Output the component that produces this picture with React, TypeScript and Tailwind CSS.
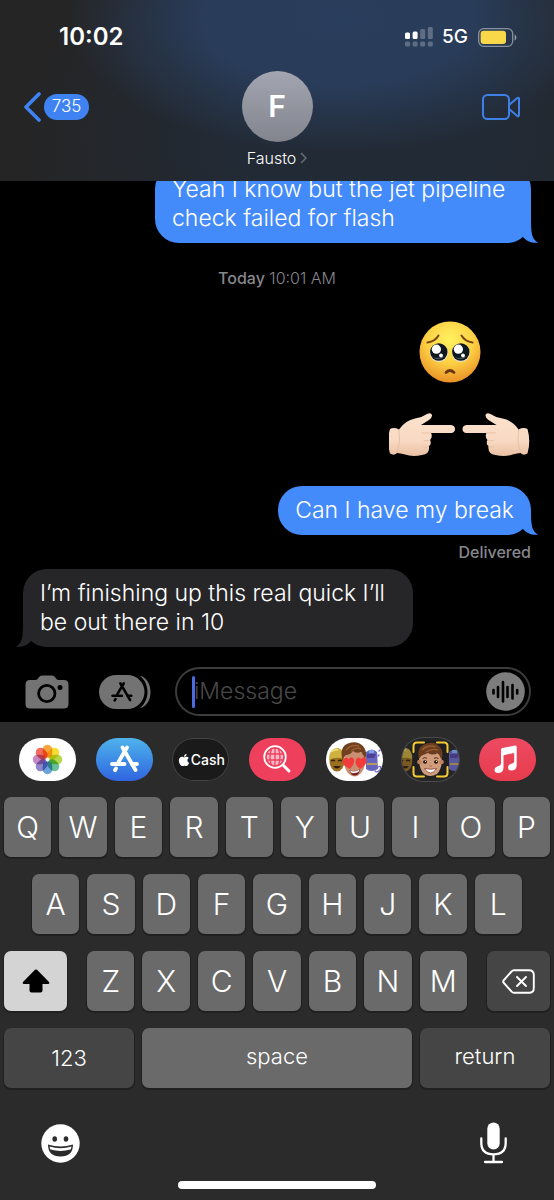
import React from "react";
import { FaApple } from "react-icons/fa";

const ROW_ONE = "QWERTYUIOP".split("");
const ROW_TWO = "ASDFGHJKL".split("");
const ROW_THREE = "ZXCVBNM".split("");

interface BubbleProps {
  children: React.ReactNode;
  side: "in" | "out";
}

function Bubble({ children, side }: BubbleProps) {
  if (side === "in") {
    return (
      <div className="relative self-start max-w-[390px] rounded-[24px] bg-[#262629] px-[17px] py-[10px] text-[23px] leading-[29px] font-[350] text-white">
        <svg className="absolute bottom-0 -left-[7px] -scale-x-100 text-[#262629]" width="24" height="25" viewBox="0 0 24 25" fill="currentColor">
          <path d="M17 0C17 15 17.500 20.500 24 24.800C17 25.300 12.500 23 9 19L4 8Z" />
        </svg>
        <p className="relative">{children}</p>
      </div>
    );
  }

  return (
    <div className="relative self-end max-w-[376px] rounded-[24px] bg-[#438afa] px-[17px] py-[10px] text-[23px] leading-[29px] font-[350] text-white">
      <svg className="absolute bottom-0 -right-[7px] text-[#438afa]" width="24" height="25" viewBox="0 0 24 25" fill="currentColor">
        <path d="M17 0C17 15 17.500 20.500 24 24.800C17 25.300 12.500 23 9 19L4 8Z" />
      </svg>
      <p className="relative">{children}</p>
    </div>
  );
}

function StatusIcons() {
  return (
    <div className="flex items-center">
      <svg width="28" height="20" viewBox="0 0 28 20" fill="#fff">
        <rect x="0" y="5.5" width="5" height="6.5" rx="1.5" />
        <rect x="7.6" y="4.5" width="5" height="7.5" rx="1.5" />
        <g opacity="0.25">
          <rect x="15.2" y="2" width="5" height="10" rx="1.5" />
          <rect x="22.8" y="0" width="5" height="12" rx="1.5" />
          <rect x="0" y="14.5" width="5" height="5" rx="1.5" />
          <rect x="7.6" y="14.5" width="5" height="5" rx="1.5" />
          <rect x="15.2" y="14.5" width="5" height="5" rx="1.5" />
          <rect x="22.8" y="14.5" width="5" height="5" rx="1.5" />
        </g>
      </svg>
      <span className="ml-[9px] mr-[10px] text-[19px] leading-6 font-medium">5G</span>
      <svg width="39" height="19" viewBox="0 0 39 19" fill="none">
        <rect x="0.7" y="0.7" width="34" height="17.6" rx="5" stroke="#fff" strokeOpacity="0.45" strokeWidth="1.3" />
        <rect x="2.6" y="2.7" width="25.4" height="13.4" rx="3" fill="#f8d849" />
        <path d="M36.6 6.5C39 7.5 39 11.5 36.6 12.5Z" fill="#fff" fillOpacity="0.5" />
      </svg>
    </div>
  );
}

function Header() {
  return (
    <header className="relative z-10 bg-[#252526] bg-[radial-gradient(ellipse_270px_135px_at_61%_10%,#293e5c_0%,#293c59_50%,transparent_100%),radial-gradient(ellipse_340px_220px_at_66%_75%,#222a35_40%,transparent_100%)] pb-[13px]">
      <div className="flex h-[54px] items-center justify-between pt-5 pl-[59px] pr-[37px]">
        <time className="text-[24px] leading-[34px] font-semibold">10:02</time>
        <StatusIcons />
      </div>
      <div className="mt-[17px] grid grid-cols-[1fr_auto_1fr] items-start">
        <button aria-label="Back" className="flex h-[71px] items-center gap-[3px] justify-self-start pl-6">
          <svg width="17" height="30" viewBox="0 0 17 30" fill="none" stroke="#3f83f2" strokeWidth="3.6" strokeLinecap="round" strokeLinejoin="round">
            <path d="M15 2L2 15L15 28" />
          </svg>
          <span className="flex h-[26px] w-[45px] items-center justify-center rounded-full bg-[#3f83f2] text-[17px] font-[350]">735</span>
        </button>
        <button className="flex flex-col items-center gap-[6px]">
          <span className="flex size-[71px] items-center justify-center rounded-full bg-gradient-to-b from-[#a3a6b0] to-[#82848e] text-[30px] font-semibold">F</span>
          <span className="flex items-center gap-1 text-[16px] leading-5 font-[350]">
            Fausto
            <svg width="7" height="12" viewBox="0 0 7 12" fill="none" stroke="#686c73" strokeWidth="1.5">
              <path d="M1 1L6 6L1 11" />
            </svg>
          </span>
        </button>
        <button aria-label="Video call" className="flex h-[71px] items-center justify-self-end pr-[34px]">
          <svg width="38" height="26" viewBox="0 0 38 26" fill="none" stroke="#3f80e8" strokeWidth="2" strokeLinejoin="round">
            <rect x="1" y="1" width="26" height="24" rx="4.5" />
            <path d="M27 11L35 4.2Q37 3 37 5V21Q37 23 35 21.8L27 15" />
          </svg>
        </button>
      </div>
    </header>
  );
}

function PleadingFace() {
  return (
    <svg width="62" height="62" viewBox="0 0 62 62" role="img" aria-label="Pleading face">
      <defs>
        <radialGradient id="face" cx="0.5" cy="0.3" r="0.7">
          <stop offset="0" stopColor="#fff25f" />
          <stop offset="0.55" stopColor="#fdd045" />
          <stop offset="1" stopColor="#e99125" />
        </radialGradient>
      </defs>
      <circle cx="31" cy="31" r="30.5" fill="url(#face)" />
      <path d="M8.5 21.5Q16 20.500 19.500 14.500M53.500 21.500Q46 20.500 42.500 14.500" fill="none" stroke="#7a4311" strokeWidth="2" strokeLinecap="round" />
      <g fill="#e9e4d8">
        <circle cx="19.800" cy="32" r="9" />
        <circle cx="41.800" cy="32" r="9" />
      </g>
      <g fill="#10181f">
        <circle cx="19.800" cy="31" r="8.700" />
        <circle cx="41.800" cy="31" r="8.700" />
      </g>
      <g fill="#4c5963">
        <path d="M14 36Q20 41 26 35Q20 38.500 14 36ZM36 36Q42 41 48 35Q42 38.500 36 36Z" />
      </g>
      <g fill="#fff">
        <circle cx="17.400" cy="28.200" r="4.600" />
        <circle cx="39.400" cy="28.200" r="4.600" />
        <circle cx="22" cy="34.500" r="1.900" />
        <circle cx="44" cy="34.500" r="1.900" />
      </g>
      <path d="M27 51.500Q31 47.500 35 51.500" fill="none" stroke="#6b3710" strokeWidth="2.800" strokeLinecap="round" />
    </svg>
  );
}

function Hand() {
  return (
    <g>
      <path
        d="M2 18Q6 16 11 18.500Q17 9.500 27 7.500Q34 6.500 39 3Q43 1 44 4Q44.500 6 41 9L33 14H63Q67 14.500 67 18Q67 21.700 63 22H43Q45 26 42 29Q44 33 41 35Q42 43 34 44Q24 46 17 43.500Q12 42 9 42Q6 45 2 42.500Q-1.500 30 2 18Z"
        fill="url(#skin)"
      />
      <path d="M11 19Q13 30 9 42" fill="none" stroke="#e3bb9e" strokeWidth="0.800" />
      <path d="M43 21.900H34M42 29Q39 30.500 36 29.500M41 35Q39 37 36 36" fill="none" stroke="#e6c0a5" strokeWidth="0.900" strokeLinecap="round" />
    </g>
  );
}

function PointingHands() {
  return (
    <svg width="142" height="47" viewBox="1 0 142 47" role="img" aria-label="Two hands pointing at each other">
      <defs>
        <linearGradient id="skin" x1="0" y1="0" x2="0" y2="1">
          <stop offset="0" stopColor="#fde3cf" />
          <stop offset="0.65" stopColor="#f8d9c2" />
          <stop offset="1" stopColor="#e9c0a3" />
        </linearGradient>
      </defs>
      <Hand />
      <g transform="matrix(-1 0 0 1 141.500 0)">
        <Hand />
      </g>
    </svg>
  );
}

function Messages() {
  return (
    <main className="-mt-4 flex flex-1 flex-col px-[23px]">
      <Bubble side="out">Yeah I know but the jet pipeline check failed for flash</Bubble>
      <p className="mt-[25px] text-center text-[16px] leading-5 font-[350] text-[#87878c]">
        <span className="font-medium">Today</span> 10:01 AM
      </p>
      <div className="mt-[33px] self-end pr-[50px]">
        <PleadingFace />
      </div>
      <div className="mt-7 self-end">
        <PointingHands />
      </div>
      <div className="mt-7 flex flex-col">
        <Bubble side="out">Can I have my break</Bubble>
      </div>
      <p className="mt-[7px] mb-[7px] self-end text-[16px] leading-5 font-medium text-[#87878c]">Delivered</p>
      <Bubble side="in">I’m finishing up this real quick I’ll be out there in 10</Bubble>
    </main>
  );
}

function AppStoreMark() {
  return (
    <g fill="none" strokeLinecap="round">
      <path d="M31 9.500L22.500 24M26.500 9.500L39.500 32M20 30.500L19 32.200" />
      <path d="M16 26H28.500M36 26H41" />
    </g>
  );
}

function Composer() {
  return (
    <form className="flex items-center pt-5 pb-[6px] pl-[25px] pr-[23px]">
      <button type="button" aria-label="Camera" className="shrink-0">
        <svg width="44" height="34" viewBox="0 0 44 34">
          <path d="M5 5H10Q12 5 13 3.500L14 2Q15 0.500 17 0.500H27Q29 0.500 30 2L31 3.500Q32 5 34 5H39Q43.500 5 43.500 9.500V29Q43.500 33.500 39 33.500H5Q0.500 33.500 0.500 29V9.500Q0.500 5 5 5Z" fill="#737373" />
          <circle cx="21.800" cy="18.500" r="8.200" fill="none" stroke="#000" strokeWidth="2.800" />
          <circle cx="35" cy="12.500" r="2.500" fill="#000" />
        </svg>
      </button>
      <button type="button" aria-label="Apps" className="ml-[30px] shrink-0">
        <svg width="52" height="34" viewBox="0 0 52 34">
          <rect width="45.500" height="34" rx="17" fill="#737373" />
          <path d="M41 0.800C55 4 55 30 41 33.200C51 25 51 9 41 0.800Z" fill="#737373" />
          <g transform="translate(1.500 1.200) scale(0.750)" stroke="#000" strokeWidth="3.500">
            <AppStoreMark />
          </g>
        </svg>
      </button>
      <div className="relative ml-6 flex h-[49px] min-w-0 flex-1 items-center rounded-full border-2 border-[#3c3c3e] pl-[15px] pr-1">
        <span className="absolute left-[15px] h-8 w-[3px] rounded-full bg-[#4d6be0]" />
        <input
          aria-label="Message"
          placeholder="iMessage"
          className="min-w-0 flex-1 bg-transparent pl-[2px] text-[23px] leading-[29px] font-[350] text-white outline-none placeholder:text-[#48484a]"
        />
        <button type="button" aria-label="Record audio" className="shrink-0">
          <svg width="39" height="39" viewBox="0 0 39 39">
            <circle cx="19.500" cy="19.500" r="19.300" fill="#7d7d7d" />
            <path d="M7.500 18V21.500M12 15V25M17 10V29.500M21.500 15V25M26.500 13V26.500M31.200 18V21.500" stroke="#000" strokeWidth="2.600" strokeLinecap="round" />
          </svg>
        </button>
      </div>
    </form>
  );
}

const PETALS = ["#f7941d", "#f4d90c", "#a7d129", "#4fb58a", "#4f93d4", "#7b72c0", "#bb73b8", "#ef5545"];

function PhotosIcon() {
  return (
    <svg className="isolate" width="57" height="43" viewBox="0 0 57 43">
      {PETALS.map((color, i) => (
        <rect key={color} className="mix-blend-multiply" x="23.700" y="6.800" width="9.600" height="13" rx="4.800" fill={color} fillOpacity="0.850" transform={`rotate(${i * 45} 28.500 21.500)`} />
      ))}
    </svg>
  );
}

function ImagesIcon() {
  return (
    <svg width="57" height="43" viewBox="0 0 57 43" fill="none" stroke="#fff" strokeLinecap="round">
      <circle cx="26" cy="19" r="10.800" strokeWidth="1.800" />
      <circle cx="26" cy="19" r="8.200" fill="#f9b9c6" stroke="none" />
      <g stroke="#ee3f5d" strokeWidth="1.300">
        <path d="M18 16H34M18 22H34M26 11V27M22.500 11Q19.500 19 22.500 27M29.500 11Q32.500 19 29.500 27" />
      </g>
      <path d="M34.500 27.500L40 33" strokeWidth="3" />
    </svg>
  );
}

function Helmet() {
  return (
    <g>
      <ellipse cx="11" cy="23" rx="7.500" ry="10.500" fill="#9a7020" />
      <path d="M3 22Q3 10 12 10Q18 11 18.500 21Q10 18 3 22Z" fill="#cfb13f" />
      <path d="M5 14Q9 11 12 12" stroke="#f3e07b" strokeWidth="1.500" fill="none" />
      <path d="M5 23Q7 21.500 9 23M12 23Q14 21.500 16 23" stroke="#382309" strokeWidth="1.500" fill="none" />
      <path d="M7 28Q11 33 15 28Z" fill="#321b0a" />
    </g>
  );
}

function Robot() {
  return (
    <g>
      <path d="M40 14Q46 9 51 14L52 31Q45 35 40 31Z" fill="#6465bd" />
      <path d="M41 16H50L48 20H41Z" fill="#4e3f96" />
      <path d="M41 25H51V27H41Z" fill="#b99a5a" />
      <path d="M43 12H48V15H43Z" fill="#7ea4e8" />
    </g>
  );
}

function StickersIcon() {
  return (
    <svg width="57" height="43" viewBox="0 0 57 43">
      <Helmet />
      <Robot />
      <path d="M53 13L54 12M52 18L53 17M52 29Q56 27 54 32Q51 35 49 33" stroke="#7568dc" strokeWidth="1.300" fill="none" strokeLinecap="round" />
      <path d="M18 20Q18 32 23 36Q29 41 34 36Q40 31 39 19Q34 10 22 12Z" fill="#c98f70" />
      <path d="M16.500 22Q13 9 22 5.500Q31 2 37 8Q42 14 39 22Q38 17 35 14Q30 16 27 13Q24 17 20 17Q17.500 19 16.500 22Z" fill="#70401f" />
      <path d="M20 12Q25 6 33 8M25 13Q30 9 35 11" fill="none" stroke="#9a5e33" strokeWidth="1.500" />
      <path d="M23.500 32Q29 35 34 31Q33 37.500 29 37.500Q25 37.500 23.500 32Z" fill="#761c20" />
      <path d="M24 32.500Q29 35 33.500 31.500L32.500 34Q28 36 25 34.500Z" fill="#fff" />
      <path d="M24 31Q15 27 17 22Q19.500 18 22.500 21Q26 17.500 28 21.500Q29 26 24 31Z" fill="#f23c3c" />
      <path d="M34 31Q28 26 30 21.500Q32 18 35 21Q38.500 17.500 40.500 21.500Q41.500 26.500 34 31Z" fill="#f23c3c" />
    </svg>
  );
}

function MemojiIcon() {
  return (
    <svg width="57" height="43" viewBox="0 0 57 43">
      <g transform="translate(-8 0)" opacity="0.700">
        <Helmet />
      </g>
      <g transform="translate(7 0)" opacity="0.800">
        <Robot />
      </g>
      <rect x="10.500" y="3" width="36" height="37" rx="4" fill="#202021" />
      <path d="M17 20Q17 31 22 36Q28 40 35 36Q40 31 40 20Q35 11 22 12Z" fill="#d19c7c" />
      <circle cx="17.500" cy="24" r="2.300" fill="#c0825f" />
      <circle cx="39.500" cy="24" r="2.300" fill="#c0825f" />
      <path d="M17 21Q14 10 22 6.500Q32 2 38 9Q42 14 39.500 22Q38 18 36 15Q30 18 26 15Q21 17 19 18Z" fill="#6a3d1f" />
      <path d="M20 12Q26 6 34 9M24 14Q30 10 36 12" stroke="#9a5e33" strokeWidth="1.300" fill="none" />
      <path d="M20.500 20.500Q23 19 25 20.300M32 20.300Q34 19 36.500 20.500" stroke="#54301a" strokeWidth="1" fill="none" />
      <ellipse cx="23" cy="24" rx="2" ry="1.800" fill="#2b190d" />
      <ellipse cx="34" cy="24" rx="2" ry="1.800" fill="#2b190d" />
      <circle cx="23.500" cy="23.500" r="0.600" fill="#fff" />
      <circle cx="34.500" cy="23.500" r="0.600" fill="#fff" />
      <path d="M27.500 27.800Q28.500 28.800 30 27.800" stroke="#a66b4b" strokeWidth="1" fill="none" />
      <path d="M22.500 30.500Q28.500 32 34.500 30.500Q32 35 28.500 35Q25 35 22.500 30.500Z" fill="#fff" stroke="#853d31" strokeWidth="0.800" />
      <path d="M11.500 14V8Q11.500 4.500 15 4.500H22M35 4.500H42Q45.500 4.500 45.500 8V14M45.500 29V35Q45.500 38.500 42 38.500H35M22 38.500H15Q11.500 38.500 11.500 35V29" fill="none" stroke="#f5ca35" strokeWidth="2" strokeLinecap="round" />
    </svg>
  );
}

function AppStrip() {
  return (
    <nav aria-label="iMessage apps" className="flex justify-between pl-[19px] pr-[18px]">
      <button aria-label="Photos" className="h-[43px] w-[57px] overflow-hidden rounded-full bg-white">
        <PhotosIcon />
      </button>
      <button aria-label="App Store" className="h-[43px] w-[57px] overflow-hidden rounded-full bg-gradient-to-b from-[#50b2ea] to-[#3264df]">
        <svg width="57" height="43" viewBox="0 0 57 43" stroke="#fff" strokeWidth="3.800">
          <AppStoreMark />
        </svg>
      </button>
      <button className="flex h-[43px] w-[57px] items-center justify-center rounded-full bg-[#1a1a1a] text-[14px] font-medium ring-1 ring-[#444] ring-inset">
        <FaApple size={14} className="shrink-0" />
        Cash
      </button>
      <button aria-label="Images" className="h-[43px] w-[57px] overflow-hidden rounded-full bg-[#ee3f5d]">
        <ImagesIcon />
      </button>
      <button aria-label="Memoji stickers" className="h-[43px] w-[57px] overflow-hidden rounded-full bg-white">
        <StickersIcon />
      </button>
      <button aria-label="Memoji" className="h-[43px] w-[57px] overflow-hidden rounded-full bg-[#252526] ring-1 ring-[#4a4a4a]">
        <MemojiIcon />
      </button>
      <button aria-label="Music" className="h-[43px] w-[57px] overflow-hidden rounded-full bg-gradient-to-b from-[#ed4a63] to-[#e73b4b]">
        <svg width="57" height="43" viewBox="0 0 57 43" fill="#fff">
          <path d="M22 11.500Q22 10.300 23.500 10L36 7.500Q37.700 7.200 37.700 9V27Q37.700 32 33 32.500Q29 32.800 29 29.500Q29 26.500 33 25.500Q35.200 25 35.200 23.500V15L24.500 17.200V29.500Q24.500 34.500 19.500 35Q15.500 35.200 15.500 32Q15.500 29 19.500 28Q22 27.500 22 25.500Z" />
        </svg>
      </button>
    </nav>
  );
}

function Key({ label }: { label: string }) {
  return (
    <button className="h-[60px] min-w-0 flex-1 rounded-[7px] bg-[#6a6a6a] text-[30px] font-light shadow-[0_1px_0_1px_#202020]">
      {label}
    </button>
  );
}

function Keyboard() {
  return (
    <section aria-label="Keyboard" className="bg-[#2b2b2b] pt-4 pb-[11px]">
      <AppStrip />
      <div className="mt-4 flex flex-col gap-[17px]">
        <div className="flex gap-2 px-1">
          {ROW_ONE.map((k) => <Key key={k} label={k} />)}
        </div>
        <div className="flex gap-2 px-8">
          {ROW_TWO.map((k) => <Key key={k} label={k} />)}
        </div>
        <div className="flex gap-5 px-1">
          <button aria-label="Shift" className="flex h-[60px] w-[63px] items-center justify-center rounded-[7px] bg-[#d4d4d4] shadow-[0_1px_0_1px_#202020]">
            <svg width="28" height="24" viewBox="0 0 28 24" fill="#000">
              <path d="M13 0.800Q14 0 15 0.800L27 13Q28 14.800 26 15H20.500V21.500Q20.500 23.500 18.500 23.500H9.500Q7.500 23.500 7.500 21.500V15H2Q0 14.800 1 13Z" />
            </svg>
          </button>
          <div className="flex flex-1 gap-2">
            {ROW_THREE.map((k) => <Key key={k} label={k} />)}
          </div>
          <button aria-label="Delete" className="flex h-[60px] w-[63px] items-center justify-center rounded-[7px] bg-[#454545] shadow-[0_1px_0_1px_#202020]">
            <svg width="33" height="25" viewBox="0 0 33 25" fill="none" stroke="#fff" strokeWidth="1.900" strokeLinecap="round" strokeLinejoin="round">
              <path d="M12 1.200H27Q31.800 1.200 31.800 6V19Q31.800 23.800 27 23.800H12Q10.500 23.800 9.500 22.500L1.500 13.500Q0.800 12.500 1.500 11.500L9.500 2.500Q10.500 1.200 12 1.200Z" />
              <path d="M15 8L24 17M24 8L15 17" />
            </svg>
          </button>
        </div>
        <div className="flex gap-2 px-1 text-[22px] font-[350]">
          <button className="h-[60px] w-[130px] rounded-[7px] bg-[#454545] shadow-[0_1px_0_1px_#202020]">123</button>
          <button className="h-[60px] flex-1 rounded-[7px] bg-[#6a6a6a] pb-1 shadow-[0_1px_0_1px_#202020]">space</button>
          <button className="h-[60px] w-[130px] rounded-[7px] bg-[#454545] pb-1 shadow-[0_1px_0_1px_#202020]">return</button>
        </div>
      </div>
      <div className="mt-[34px] flex items-center justify-between pl-[41px] pr-[47px]">
        <button aria-label="Emoji">
          <svg width="39" height="39" viewBox="0 0 39 39" fill="#2b2b2b">
            <circle cx="19.500" cy="19.500" r="19.200" fill="#fff" />
            <ellipse cx="13.700" cy="15" rx="2.300" ry="2.800" />
            <ellipse cx="25" cy="15" rx="2.300" ry="2.800" />
            <path d="M7 20.500Q19.500 24.500 32 20.500Q32 32.500 19.500 32.500Q7 32.500 7 20.500Z" />
            <path d="M8.500 22.500Q19.500 26 30.500 22.500Q30.300 24.500 29.500 25.500Q19.500 28.300 9.500 25.500Q8.700 24.500 8.500 22.500Z" fill="#fff" />
          </svg>
        </button>
        <button aria-label="Dictate">
          <svg width="27" height="42" viewBox="0 0 27 42" fill="none" stroke="#fff" strokeLinecap="round">
            <rect x="7.300" y="0.500" width="12.400" height="27" rx="6.200" fill="#fff" stroke="none" />
            <path d="M1.300 16.500V21Q1.300 32.300 13.500 32.300Q25.700 32.300 25.700 21V16.500M13.500 32.500V40M5 40H22" strokeWidth="2.300" />
          </svg>
        </button>
      </div>
      <div className="mx-auto mt-[17px] h-2 w-[198px] rounded-full bg-white" />
    </section>
  );
}

export default function App() {
  return (
    <div className="flex min-h-screen flex-col overflow-hidden bg-black font-['Inter','Liberation_Sans',sans-serif] text-white">
      <Header />
      <Messages />
      <Composer />
      <Keyboard />
    </div>
  );
}
